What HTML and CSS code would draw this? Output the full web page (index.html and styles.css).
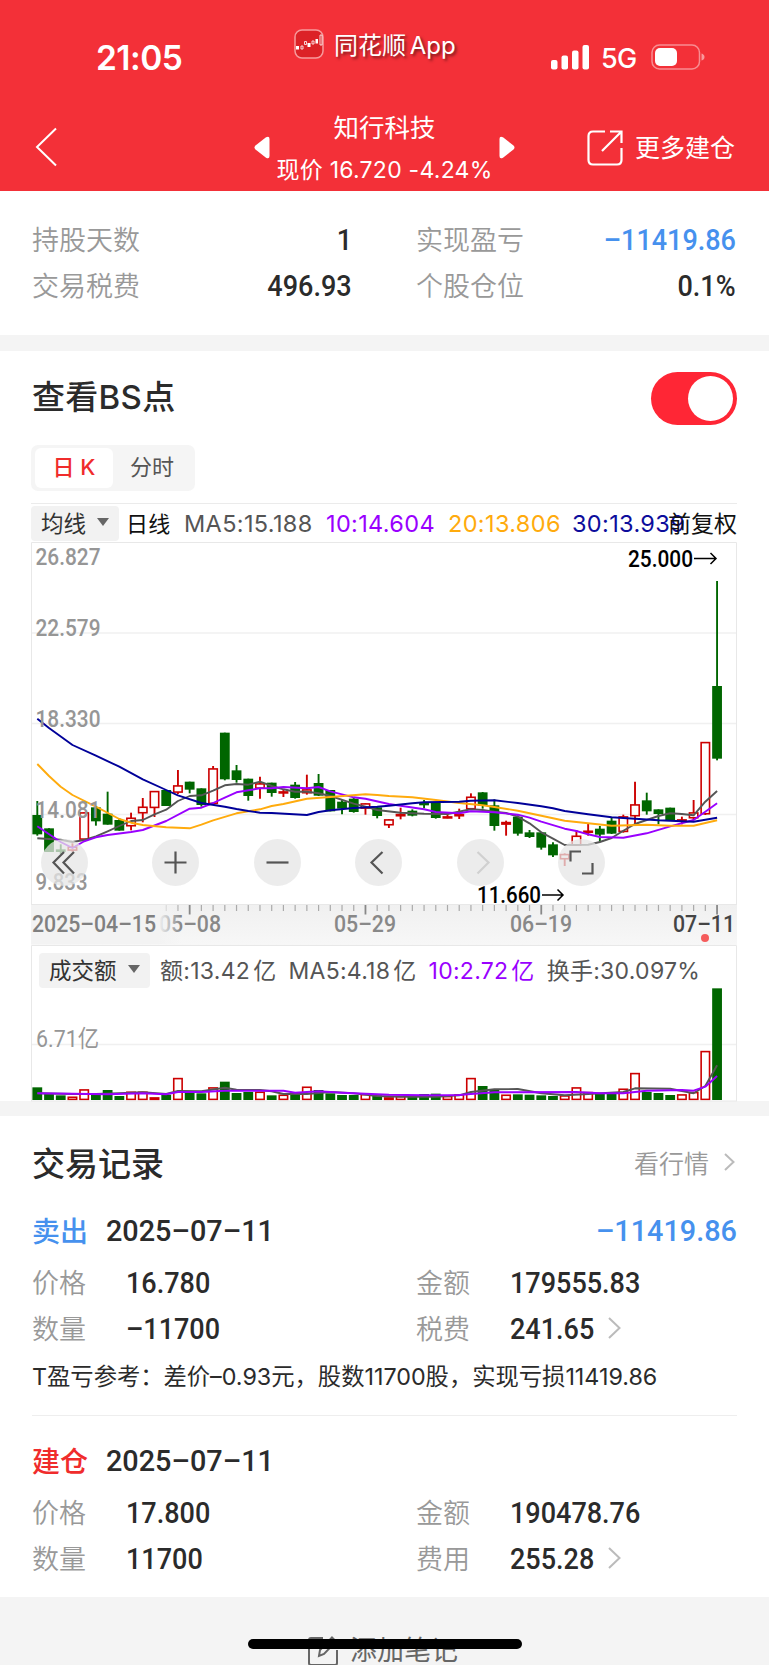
FILE: index.html
```html
<!DOCTYPE html>
<html lang="zh-CN">
<head>
    <meta charset="UTF-8">
    <meta name="viewport" content="width=device-width, initial-scale=1.0">
    <title>知行科技</title>
    <link rel="stylesheet" href="styles.css">
</head>
<body>

    <header class="header">
        <div class="status">
            <span class="time">21:05</span>
            <div class="app">
                <svg class="app-icon" width="30" height="30" viewBox="0 0 30 30">
                    <rect x="1" y="1" width="28" height="28" rx="7" fill="#dc2227" stroke="#f79a9c" stroke-width="1.5"/>
                    <path d="M2 17h3v3.500H2zM13.500 14h3v4h-3zM21.500 10h2.500v4.500h-2.500z" fill="#fff"/>
                    <path d="M7 17h2v3H7zM10.500 12.500h2v3h-2zM18 12h2v3h-2zM26 6h2v10h-2z" fill="#dc2227" stroke="#fff" stroke-width=".8"/>
                </svg>
                <span>同花顺 App</span>
            </div>
            <div class="signal">
                <svg width="38" height="25" viewBox="0 0 38 25" fill="#fff">
                    <rect x="0" y="15" width="6.500" height="9.500" rx="2"/>
                    <rect x="10.500" y="10.500" width="6.500" height="14" rx="2"/>
                    <rect x="21" y="5.500" width="6.500" height="19" rx="2"/>
                    <rect x="31.500" y="0" width="6.500" height="24.500" rx="2"/>
                </svg>
                <span class="net">5G</span>
                <svg width="54" height="26" viewBox="0 0 54 26">
                    <rect x="1" y="1" width="47.500" height="24" rx="7.500" fill="none" stroke="#fff" stroke-opacity=".45" stroke-width="1.500"/>
                    <rect x="4" y="4" width="22" height="18" rx="5" fill="#fff"/>
                    <path d="M50.500 9.500q3 1 3 3.500t-3 3.500z" fill="#fff" fill-opacity=".5"/>
                </svg>
            </div>
        </div>
        <div class="nav">
            <svg class="back" width="22" height="40" viewBox="0 0 22 40" fill="none" stroke="#fff" stroke-width="2"><path d="M21 1.500L2 20l19 18.500"/></svg>
            <div class="stock">
                <svg width="16" height="23" viewBox="0 0 16 23" fill="#fff"><path d="M1.500 9.500L12 1.200Q15.500-.5 15.500 3v17q0 3.500-3.500 1.800L1.500 13.500q-2-2 0-4z"/></svg>
                <div class="stock-name">
                    <h1>知行科技</h1>
                    <p>现价 16.720 -4.24%</p>
                </div>
                <svg width="16" height="23" viewBox="0 0 16 23" fill="#fff"><path d="M14.500 9.500L4 1.200Q.5-.5.500 3v17q0 3.500 3.500 1.800l10.500-8.300q2-2 0-4z"/></svg>
            </div>
            <div class="more">
                <svg width="36" height="36" viewBox="0 0 36 36" fill="none" stroke="#fff" stroke-width="2.200"><path d="M18 1.500H6Q1.500 1.500 1.500 6v24q0 4.500 4.500 4.500h24q4.500 0 4.500-4.500V18M23 1.500h11.500V13M34 2L15 21"/></svg>
                <span>更多建仓</span>
            </div>
        </div>
    </header>

    <section class="summary">
        <div class="cell"><span class="label">持股天数</span><b class="num">1</b></div>
        <div class="cell"><span class="label">实现盈亏</span><b class="num blue">–11419.86</b></div>
        <div class="cell"><span class="label">交易税费</span><b class="num">496.93</b></div>
        <div class="cell"><span class="label">个股仓位</span><b class="num">0.1%</b></div>
    </section>

    <section class="chart-card">
        <div class="card-head">
            <h2>查看BS点</h2>
            <span class="switch"><i></i></span>
        </div>
        <div class="tabs">
            <span class="tab active">日 K</span>
            <span class="tab">分时</span>
        </div>

        <div class="ma-row">
            <span class="drop">均线 <i class="arrow"></i></span>
            <span class="day">日线</span>
            <span class="ma5">MA5:15.188</span>
            <span class="ma10">10:14.604</span>
            <span class="ma20">20:13.806</span>
            <span class="ma30">30:13.939</span>
            <span class="fq">前复权</span>
        </div>

        <div class="kline">
            <svg id="kline" width="706" height="363" viewBox="0 0 706 363"></svg>
            <div class="tools">
                <span class="tool"><svg viewBox="0 0 47 47"><path d="M23 13L12.500 23.500 23 34.500M33 13L22.500 23.500 33 34.500"/></svg></span>
                <span class="tool"><svg viewBox="0 0 47 47"><path d="M12.500 23.500h22M23.500 12.500v22"/></svg></span>
                <span class="tool"><svg viewBox="0 0 47 47"><path d="M12.500 23.500h22"/></svg></span>
                <span class="tool"><svg viewBox="0 0 47 47"><path d="M27.500 13L16.500 23.500l11 11"/></svg></span>
                <span class="tool off"><svg viewBox="0 0 47 47"><path d="M20.500 13l11 10.500-11 11"/></svg></span>
                <span class="tool"><svg viewBox="0 0 47 47"><path d="M12.500 22.500V12.500H23M34.500 24v10.500H24"/></svg></span>
            </div>
        </div>
        <svg id="axis" class="axis" width="706" height="40" viewBox="0 0 706 40"></svg>
        <div class="volume">
            <svg id="volume" width="706" height="157" viewBox="0 0 706 157"></svg>
            <div class="vol-row">
                <span class="drop">成交额 <i class="arrow"></i></span>
                <span>额:13.42<em>亿</em></span>
                <span>MA5:4.18<em>亿</em></span>
                <span class="ma10">10:2.72<em>亿</em></span>
                <span>换手:30.097%</span>
            </div>
        </div>
    </section>

    <section class="records">
        <div class="card-head">
            <h2>交易记录</h2>
            <span class="link">看行情 <svg width="11" height="18" viewBox="0 0 11 18"><path d="M1 1l8.500 8L1 17"/></svg></span>
        </div>

        <div class="record">
            <div class="record-head"><span class="type blue">卖出</span><b class="num">2025–07–11</b><b class="num total blue">–11419.86</b></div>
            <div class="grid">
                <div><span class="label">价格</span><b class="num">16.780</b></div>
                <div><span class="label">金额</span><b class="num">179555.83</b></div>
                <div><span class="label">数量</span><b class="num">–11700</b></div>
                <div><span class="label">税费</span><b class="num">241.65</b><svg class="go" width="13" height="22" viewBox="0 0 13 22"><path d="M1 1l10.500 10L1 21"/></svg></div>
            </div>
            <p class="tip">T盈亏参考：差价–0.93元，股数11700股，实现亏损11419.86</p>
        </div>

        <div class="record">
            <div class="record-head"><span class="type red">建仓</span><b class="num">2025–07–11</b></div>
            <div class="grid">
                <div><span class="label">价格</span><b class="num">17.800</b></div>
                <div><span class="label">金额</span><b class="num">190478.76</b></div>
                <div><span class="label">数量</span><b class="num">11700</b></div>
                <div><span class="label">费用</span><b class="num">255.28</b><svg class="go" width="13" height="22" viewBox="0 0 13 22"><path d="M1 1l10.500 10L1 21"/></svg></div>
            </div>
        </div>
    </section>

    <footer class="note">
        <svg width="30" height="30" viewBox="0 0 30 30" fill="none" stroke="#666" stroke-width="2"><path d="M15 2H3Q1 2 1 4v23q0 2 2 2h24q2 0 2-2V14M11 20l1-6L24 1.500l4 4L16 18z"/></svg>
        <span>添加笔记</span>
    </footer>
    <div class="home-bar"></div>

    <script src="chart.js"></script>
</body>
</html>
```
FILE: styles.css
```css
* {
    box-sizing: border-box;
}
body {
    margin: 0;
    height: 1665px;
    overflow: hidden;
    position: relative;
    background: #f4f4f4;
    color: #2b2b2b;
    font-family: Inter, "Noto Sans CJK SC", sans-serif;
    font-weight: 400;
}
h1, h2, p {
    margin: 0;
    font-weight: 400;
}
em, i {
    font-style: normal;
}
svg {
    display: block;
    flex: none;
    overflow: visible;
}

/* header */
.header {
    height: 191px;
    background: #f33038;
    color: #fff;
}
.status {
    display: grid;
    grid-template-columns: 294px 1fr 218px;
    height: 104px;
}
.time {
    padding: 37px 0 0 96px;
    font-size: 33.5px;
    font-weight: 600;
    line-height: 42px;
    letter-spacing: -0.5px;
}
.app {
    display: flex;
    align-items: center;
    gap: 10px;
    height: 88px;
    font-size: 24px;
    word-spacing: -3px;
    text-shadow: 2px 2px 3px rgba(0, 0, 0, 0.5);
}
.app span {
    margin-top: -2px;
}
.signal {
    display: flex;
    align-items: center;
    height: 30px;
    margin-top: 42px;
}
.net {
    width: 62px;
    padding: 2px 0 0 12px;
    font-size: 27px;
    font-weight: 500;
    letter-spacing: -0.6px;
}
.nav {
    display: grid;
    grid-template-columns: 254px 1fr 182px;
    height: 87px;
}
.back {
    margin: 23px 0 0 35px;
}
.stock {
    display: flex;
    align-items: center;
    justify-content: space-between;
    width: 261px;
    height: 87px;
}
.stock-name {
    text-align: center;
    white-space: nowrap;
}
.stock-name h1 {
    font-size: 25.5px;
    line-height: 40px;
    padding-top: 2px;
}
.stock-name p {
    font-size: 23px;
    line-height: 40px;
    letter-spacing: 0.25px;
    padding-top: 2px;
}
.more {
    display: flex;
    align-items: center;
    gap: 12px;
    height: 87px;
    font-size: 25px;
}
.more span {
    margin-top: -3px;
}

/* numbers, condensed a little */
.num {
    display: inline-block;
    font-family: Roboto, sans-serif;
    font-size: 30px;
    font-weight: 500;
    transform: scaleX(0.9);
    transform-origin: left;
}
.label {
    color: #999;
    font-size: 27px;
    font-weight: 350;
    margin-top: -2px;
}
.blue {
    color: #4691ee;
}
.red {
    color: #f02c2c;
}

/* summary */
.summary {
    display: grid;
    grid-template-columns: 320px 320px;
    column-gap: 64px;
    grid-auto-rows: 46px;
    height: 144px;
    padding: 25px 32px 0;
    background: #fff;
}
.cell {
    display: flex;
    align-items: center;
    justify-content: space-between;
}
.cell .num {
    transform-origin: right;
}

.card-head {
    display: flex;
    align-items: center;
    justify-content: space-between;
}
.card-head h2 {
    font-size: 33px;
    font-weight: 500;
}

/* chart */
.chart-card {
    height: 750px;
    margin-top: 16px;
    padding: 0 32px 0 31px;
    background: #fff;
}
.chart-card .card-head {
    height: 94px;
}
.chart-card h2 {
    padding: 0 0 6px 1px;
    letter-spacing: 0.3px;
}
.switch {
    display: flex;
    justify-content: flex-end;
    align-items: center;
    width: 86px;
    height: 53px;
    padding-right: 4px;
    border-radius: 27px;
    background: #ff2635;
}
.switch i {
    width: 45px;
    height: 45px;
    border-radius: 50%;
    background: #fff;
}
.tabs {
    display: flex;
    width: 164px;
    height: 46px;
    padding: 3px 4px;
    border-radius: 7px;
    background: #f5f5f5;
}
.tab {
    width: 78px;
    line-height: 39px;
    text-align: center;
    font-size: 22px;
    color: #555;
}
.tab.active {
    border-radius: 6px;
    background: #fff;
    color: #f02c2c;
    font-weight: 500;
}
.ma-row {
    position: relative;
    display: flex;
    align-items: center;
    width: 706px;
    height: 39px;
    margin-top: 12px;
    border-top: 1px solid #ebebeb;
    font-size: 23.5px;
    letter-spacing: 0.35px;
    white-space: nowrap;
}
.drop {
    display: flex;
    align-items: center;
    justify-content: space-between;
    height: 35px;
    padding: 0 10px 2px;
    border-radius: 4px;
    background: #f2f2f2;
    color: #333;
    font-size: 22.5px;
    letter-spacing: 0;
}
.ma-row .drop {
    width: 88px;
}
.arrow {
    border: 6px solid transparent;
    border-top: 8px solid #666;
    border-bottom: 0;
}
.day {
    width: 56px;
    padding: 0 0 3px 7px;
    color: #111;
    font-size: 22px;
}
.ma5 {
    width: 143px;
    padding-left: 9px;
    color: #555;
}
.ma10 {
    color: #9900ff;
}
.ma-row .ma10 {
    width: 122px;
    padding-left: 8px;
}
.ma20 {
    width: 124px;
    padding-left: 8px;
    color: #ffab0d;
}
.ma30 {
    padding-left: 8px;
    color: #0d0d9c;
}
.fq {
    position: absolute;
    right: 0;
    padding-bottom: 3px;
    color: #111;
    font-size: 23px;
    letter-spacing: 0;
}
.kline {
    position: relative;
}
.tools {
    position: absolute;
    left: 10px;
    top: 297px;
    display: flex;
    gap: 54.6px;
}
.tool {
    width: 47px;
    height: 47px;
    border-radius: 50%;
    background: rgba(230, 230, 230, 0.75);
}
.tool:first-child {
    margin-right: 9.500px;
}
.tool path {
    fill: none;
    stroke: #555;
    stroke-width: 2.2;
}
.tool.off path {
    stroke: #d0d0d0;
}
.axis {
    background: linear-gradient(#f0f0f0, #f7f7f7);
}
.volume {
    position: relative;
}
.vol-row {
    position: absolute;
    left: 8px;
    top: 7px;
    display: flex;
    align-items: center;
    gap: 12px;
    color: #555;
    font-size: 23px;
    letter-spacing: 0.28px;
    white-space: nowrap;
}
.vol-row > span {
    padding-bottom: 2px;
}
.vol-row .drop {
    width: 111px;
    margin-right: -2px;
}
.vol-row em {
    margin-left: 3px;
}
.chart-text {
    font-family: Roboto, "Noto Sans CJK SC", sans-serif;
    font-size: 23.5px;
}

/* trade records */
.records {
    height: 481px;
    margin-top: 15px;
    padding: 0 32px;
    background: #fff;
}
.records .card-head {
    height: 94px;
    padding-bottom: 3px;
}
.link {
    display: flex;
    align-items: center;
    gap: 15px;
    padding-right: 2px;
    color: #999;
    font-size: 25px;
    font-weight: 350;
}
.link path, .go path {
    fill: none;
    stroke: #bbb;
    stroke-width: 2;
}
.record-head {
    display: flex;
    align-items: center;
    height: 40px;
    margin-bottom: 9px;
}
.record-head .num {
    transform: scaleX(0.96);
}
.type {
    width: 74px;
    margin-top: -1px;
    font-size: 28px;
    font-weight: 500;
}
.total {
    margin-left: auto;
    transform-origin: right;
}
.grid {
    display: grid;
    grid-template-columns: 384px 1fr;
    grid-auto-rows: 46px;
}
.grid div {
    display: flex;
    align-items: center;
}
.grid .label {
    width: 94px;
}
.go {
    margin-left: 4px;
}
.tip {
    height: 64px;
    font-size: 23.3px;
    line-height: 52px;
    white-space: nowrap;
}
.record + .record {
    border-top: 1px solid #eee;
    padding-top: 24px;
}

/* bottom */
.note {
    display: flex;
    align-items: center;
    gap: 12px;
    padding: 38px 0 0 308px;
    color: #666;
    font-size: 27px;
    line-height: 32px;
}
.home-bar {
    position: absolute;
    left: 248px;
    top: 1639px;
    width: 274px;
    height: 10px;
    border-radius: 5px;
    background: #000;
}
```
FILE: chart.js
```js
const GREEN = '#006600', RED = '#cc0000';
const STEP = 11.72, FIRST = 6.3;
const xAt = i => FIRST + i * STEP;

// color, high, body top, body bottom, low (thirds of a pixel from the block base)
const blocks = [
    { base: 534, rows: [
        'g 243 285 343 347', 'g 325 325 396 396', 'g 373 388 396 402', 'r 370 380 392 395',
        'r 277 277 359 359', 'g 262 262 304 317', 'g 215 281 314 314', 'g 294 300 332 332',
        'r 278 293 319 331', 'r 234 260 280 307', 'r 213 213 264 291', 'g 210 210 258 258',
        'r 150 196 218 222', 'g 185 185 209 220', 'g 205 205 255 260', 'r 138 145 252 252',
        'g 38 38 178 181', 'g 135 151 180 188', 'g 176 176 228 242', 'r 170 190 206 236',
        'g 188 188 219 230'
    ] },
    { base: 594, rows: [
        'r 148 154 160 171', 'g 126 134 174 176', 'r 104 148 160 164', 'g 102 129 167 168',
        'g 150 150 214 214', 'g 180 185 206 223', 'g 172 176 216 218', 'r 190 190 206 224',
        'g 200 202 228 235', 'r 238 238 256 264', 'r 203 222 229 238', 'g 208 212 227 229',
        'g 180 188 196 205', 'g 188 188 234 236', 'r 222 229 235 235', 'r 206 222 229 237',
        'r 160 170 208 208', 'g 156 157 197 206', 'g 178 196 258 272', 'r 242 246 254 287'
    ] },
    { base: 294, rows: [
        'g 526 530 581 587', 'g 570 577 591 594', 'g 577 577 623 629', 'g 607 613 646 651',
        'r 640 642 658 678', 'r 570 587 617 618', 'r 549 572 576 587', 'g 558 566 584 605',
        'g 531 542 581 582', 'r 524 529 576 578', 'r 425 493 529 554', 'g 458 481 514 524',
        'g 508 508 522 553', 'g 503 503 543 543', 'r 530 538 545 553', 'r 480 517 535 540',
        'r 306 306 523 525', 'g -177 138 356 361'
    ] }
];

// index:y
const maLines = [
    ['#555555', '0:889 2:893 3:900 4:894 5:883 6:868 7:852 8:837 9:834 10:817 11:803 12:777 13:762 14:760 15:746 16:730 17:726 18:728 19:719 20:732 21:742 22:749 23:749 24:754 25:762 27:785 28:794 29:804 31:812 33:815 35:816 37:802 38:804 39:809 40:813 41:824 42:844 43:871 44:890 45:909 47:908 48:900 49:888 50:866 51:846 52:834 53:822 54:814 55:816 56:820 57:779 58:747'],
    ['#9900ff', '0:853 2:900 3:918 4:898 5:886 6:879 8:870 9:864 11:837 13:800 14:797 15:783 16:767 17:751 19:739 20:739 21:735 23:739 24:735 25:748 27:766 28:770 30:786 33:802 34:810 36:814 37:808 39:811 41:818 42:827 43:839 45:860 46:867 47:877 48:885 50:887 52:874 54:853 56:834 57:809 58:784'],
    ['#ffab0d', '0:666 1:702 2:734 3:759 5:794 7:831 8:842 9:849 11:856 13:859 14:848 15:835 17:814 19:802 20:792 21:786 23:770 25:765 28:757 29:759 30:762 32:766 34:774 36:783 38:790 39:795 41:806 43:821 45:836 47:844 49:851 52:848 54:851 56:851 58:835'],
    ['#000099', '0:530 1:558 3:609 5:641 7:674 9:712 11:744 12:760 14:783 16:794 17:801 18:807 19:812 20:813 23:819 24:810 25:805 27:798 29:794 30:791 32:784 33:781 36:779 37:776 39:775 41:783 43:793 44:799 45:807 47:817 49:826 51:830 53:835 56:839 57:833 58:827']
];

const volumes = '38 20 14 10 32 17 30 12 25 25 8 16 66 25 20 38 55 21 24 25 14 16 20 40 30 20 15 15 18 14 8 12 14 18 19 12 17 66 42 30 16 17 16 14 12 14 38 24 20 18 34 81 24 21 15 17 24 147 335'.split(' ').map(Number);
const volLines = [
    ['#555555', '0:20 3:18 5:18 7:20 9:23 11:18 12:27 14:26 16:37 17:31 19:30 20:26 21:18 23:18 25:24 27:20 29:12 31:10 34:10 36:14 37:24 39:32 41:33 43:20 45:14 47:18 50:24 51:35 54:34 56:20 57:42 58:104'],
    ['#9900ff', '0:20 6:17 9:20 11:17 12:24 14:24 16:28 19:28 21:28 22:22 24:26 26:22 30:16 33:14 36:15 37:18 39:23 46:24 48:20 50:20 52:28 55:30 56:28 57:40 58:72']
];

function line(x1, y1, x2, y2, color, w) {
    return `<path d="M${x1} ${y1}L${x2} ${y2}" stroke="${color}" stroke-width="${w}"/>`;
}
function text(str, x, y, len, color, weight) {
    return `<text class="chart-text" x="${x}" y="${y}" textLength="${len}" lengthAdjust="spacingAndGlyphs" fill="${color}" font-weight="${weight || 400}">${str}</text>`;
}
function body(color, x, top, bottom) {
    if (color === 'g') {
        return `<rect x="${x - 4.9}" y="${top}" width="9.800" height="${Math.max(bottom - top, 2)}" fill="${GREEN}"/>`;
    }
    return `<rect x="${x - 4.2}" y="${top + 0.6}" width="8.400" height="${Math.max(bottom - top - 1.2, 1)}" fill="#fff" stroke="${RED}" stroke-width="1.600"/>`;
}
function curve(data, toY) {
    const pts = data[1].split(' ').map(p => {
        const [i, y] = p.split(':').map(Number);
        return xAt(i).toFixed(1) + ',' + toY(y).toFixed(1);
    });
    return `<polyline points="${pts.join(' ')}" fill="none" stroke="${data[0]}" stroke-width="1.900" stroke-linejoin="round"/>`;
}

// price
let out = '';
[91, 181.5, 272.5].forEach(y => out += line(0, y, 706, y, '#f0f0f0', 1.3));
const candles = [];
blocks.forEach(b => b.rows.forEach(r => {
    const p = r.split(' ');
    candles.push([p[0]].concat(p.slice(1).map(v => (Number(v) + b.base) / 3)));
}));
candles.forEach(([c, hi, top, bottom, lo], i) => {
    out += line(xAt(i), hi, xAt(i), lo, c === 'g' ? GREEN : RED, 1.9) + body(c, xAt(i), top, bottom);
});
maLines.forEach(m => out += curve(m, y => y / 3));
out += '<path d="M.500 363V.500H705.500V363M0 362.500H706" fill="none" stroke="#e8e8e8"/>';
[['26.827', 23], ['22.579', 94], ['18.330', 185], ['14.081', 276], ['9.833', 347.5]].forEach(([t, y]) => {
    out += text(t, 4.5, y, t.length > 5 ? 65 : 52, '#969696', 500);
});
out += text('25.000', 597, 24.5, 65, '#000', 500) + text('11.660', 446, 360.500, 64, '#000', 500);
out += '<path d="M663 16.500h22m-5.500-5.500l5.500 5.500-5.500 5.500M511 353h21m-5.500-5.500l5.500 5.500-5.500 5.500" fill="none" stroke="#000" stroke-width="1.500"/>';
document.getElementById('kline').innerHTML = out;

// dates
out = '';
for (let i = 11; i < 59; i++) {
    const big = (i - 13) % 15 === 0;
    out += line(xAt(i), 0, xAt(i), big ? 9.5 : 6, big ? '#888' : '#aaa', big ? 1.8 : 1.2);
}
out += text('05–08', 128, 27, 62, '#888', 500) + text('05–29', 303, 27, 62, '#888', 500) + text('06–19', 479, 27, 62, '#888', 500) + text('07–11', 642, 27, 62, '#444', 500);
out += '<defs><linearGradient id="fade"><stop offset=".85" stop-color="#f3f3f3"/><stop offset="1" stop-color="#f3f3f3" stop-opacity="0"/></linearGradient></defs>';
out += '<rect width="150" height="39" fill="url(#fade)"/>' + text('2025–04–15', 1, 27, 124, '#808080', 500);
out += '<circle cx="674" cy="33" r="4" fill="#f55c5c"/>';
document.getElementById('axis').innerHTML = out;

// volume
out = line(0, 99.5, 706, 99.5, '#f0f0f0', 1.3);
volumes.forEach((v, i) => out += body(candles[i][0], xAt(i), 155 - v / 3, 155));
volLines.forEach(m => out += curve(m, y => 155 - y / 3));
out += '<path d="M.500 156V.500H705.500V156M0 156H706" fill="none" stroke="#e8e8e8"/>' + text('6.71亿', 5, 102, 63, '#969696');
document.getElementById('volume').innerHTML = out;
```
